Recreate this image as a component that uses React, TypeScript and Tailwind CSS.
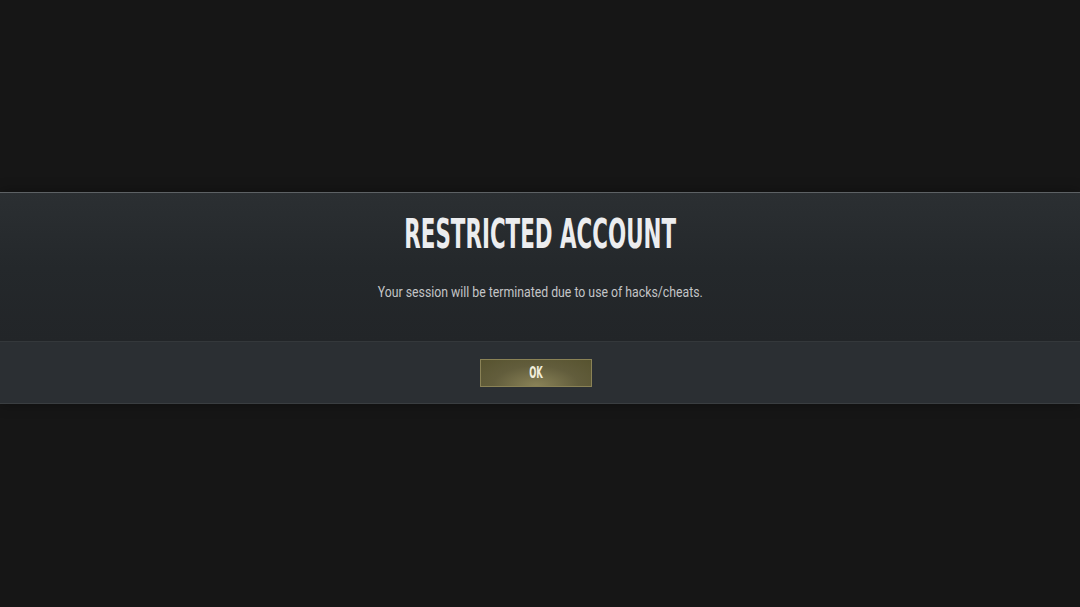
import React from "react";

export default function App() {
  return (
    <div className="w-[1080px] h-[607px] bg-[#161616] flex flex-col overflow-hidden relative">
      <div className="w-full mt-[192px] flex flex-col shadow-[0_0_12px_rgba(0,0,0,0.35)]">
        <div className="h-[1px] bg-[#5d6164]" />
        <div className="h-[148px] bg-gradient-to-b from-[#2b2f32] via-[#24282b] to-[#222528] flex flex-col items-center">
          <div
            className="mt-[17px] text-[41px] leading-[48px] font-bold text-[#ecedef] scale-x-[0.58] origin-center whitespace-nowrap"
            style={{ fontFamily: '"DejaVu Sans Condensed", "DejaVu Sans", sans-serif' }}
          >
            RESTRICTED ACCOUNT
          </div>
          <div
            className="mt-[25px] text-[14px] leading-[18px] text-[#c3c5c7] scale-x-[0.877] origin-center whitespace-nowrap"
            style={{ fontFamily: 'Roboto, "Noto Sans", sans-serif' }}
          >
            Your session will be terminated due to use of hacks/cheats.
          </div>
        </div>
        <div className="h-[1px] bg-[#34383b]" />
        <div className="h-[61px] bg-[#2b2f33] flex items-center justify-center">
          <button className="w-[112px] h-[28px] ml-[-8px] mt-[1px] border border-[#8a8256] bg-[radial-gradient(ellipse_at_50%_100%,#8a8358_0%,#625d3c_55%,#57532f_100%)] flex items-center justify-center">
            <span
              className="text-[15px] font-bold text-[#f1eedc] scale-x-[0.62] inline-block"
              style={{ fontFamily: '"DejaVu Sans Condensed", "DejaVu Sans", sans-serif' }}
            >
              OK
            </span>
          </button>
        </div>
        <div className="h-[1px] bg-[#3a3e41]" />
      </div>
    </div>
  );
}
